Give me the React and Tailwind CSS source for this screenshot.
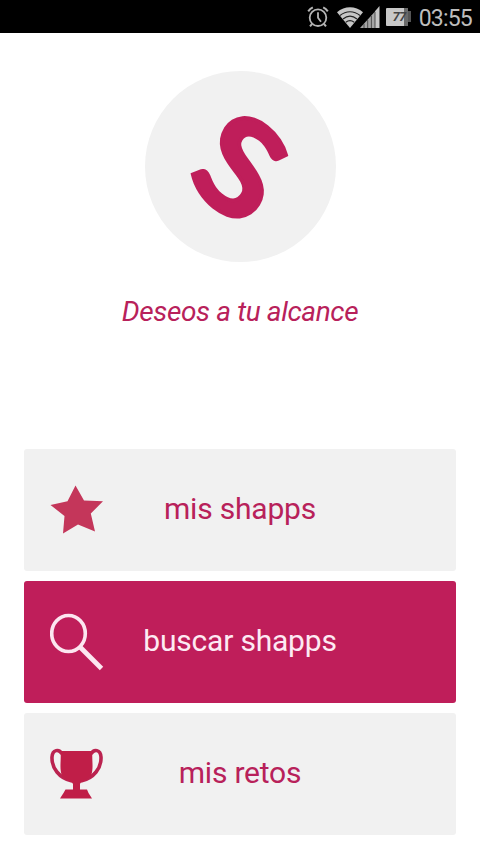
import clsx from 'clsx';

function AlarmIcon() {
  return (
    <svg width="22" height="22" viewBox="0 0 22 22" fill="none" stroke="#b4b4b4" strokeWidth="1.8">
      <circle cx="11" cy="11.7" r="8.3" />
      <path d="M11 6.2v5.6l3 4" />
      <path d="M1.2 5.4a13 13 0 0 1 4.6-4M20.8 5.4a13 13 0 0 0-4.6-4M5 18l-2 2.4M17 18l2 2.4" strokeWidth="2" />
    </svg>
  );
}

function WifiIcon() {
  return (
    <svg width="26" height="21" viewBox="0 0 26 21">
      <path d="M0 5.2C7.5-1.4 18.5-1.4 26 5.2L13 21Z" fill="#c6c6c6" />
      <g fill="none" stroke="#222" strokeWidth="1.1">
        <path d="M3 8.5c6-5 14-5 20 0" />
        <path d="M6 12c4.3-3.5 9.7-3.5 14 0" />
        <path d="M8.8 15.2c2.6-2 5.8-2 8.4 0" />
      </g>
    </svg>
  );
}

function SignalIcon() {
  return (
    <svg width="20" height="22" viewBox="0 0 20 22">
      <path d="M0 22L15 5.5V22Z" fill="#a4a4a4" />
      <path d="M15 5.3L19.5 0V22H15Z" fill="#c6c6c6" />
      <path d="M4 18v4M7.7 14v8M11.4 10v12M15 6v16" stroke="#444" strokeWidth="0.9" />
    </svg>
  );
}

function Battery() {
  return (
    <div className="flex items-center">
      <div className="flex h-[18px] w-[22px] items-center justify-end rounded-l-[1px] bg-linear-to-r from-[#c8c8c8] from-80% to-[#6a6a6a] to-80%">
        <span className="pr-0.5 text-[13px] leading-none font-bold tracking-tighter text-[#444] italic">77</span>
      </div>
      <div className="h-[11px] w-[3px] bg-[#555]" />
    </div>
  );
}

function Logo() {
  return (
    <div className="flex size-[191px] items-center justify-center rounded-full bg-[#f1f1f1]">
      <svg width="191" height="191" viewBox="0 0 191 191" className="overflow-visible">
        <text
          transform="translate(95.5 95.8) scale(1.05 1.2) rotate(35) scale(1.35 1.15)"
          y="36"
          textAnchor="middle"
          fontSize="99"
          strokeWidth="2.6"
          className="fill-[#bf1e5a] stroke-[#bf1e5a] font-[Lato] font-bold"
        >
          S
        </text>
      </svg>
    </div>
  );
}

function StarIcon() {
  return (
    <svg width="54" height="50" viewBox="0 0 54 50">
      <path d="M25.5 0.5L34 15.5L53 16.3L40.8 28.5L45 46.6L28 39.5L13 48.6L14.5 31L0.5 20L17.5 16.3Z" fill="#c4365a" />
    </svg>
  );
}

function SearchIcon() {
  return (
    <svg width="54" height="60" viewBox="0 0 54 60" fill="none" stroke="#fce6f0">
      <ellipse cx="18.5" cy="21.5" rx="16.8" ry="18" strokeWidth="3.6" />
      <path d="M30.5 35.5L51.5 56.5" strokeWidth="4.8" />
    </svg>
  );
}

function TrophyIcon() {
  return (
    <svg width="54" height="51" viewBox="0 0 54 51">
      <g fill="none" stroke="#bb2350" strokeWidth="3.6">
        <path d="M12 6C9 0.5 2.5 1.5 2 9C1.5 20 9 30 22 33" />
        <path d="M41 6C44 0.5 50.5 1.5 51 9C51.5 20 44 30 31 33" />
      </g>
      <path d="M10.5 3H42.5C41.5 12 44 20 41 28C37 33 31 33 30 36V41.5H37L38.5 45L42 50.5H10L13.5 45L15.5 41.5H23V36C22 33 16 33 12 28C9 20 11.5 12 10.5 3Z" fill="#c01e48" />
    </svg>
  );
}

const items = [
  { label: 'mis shapps', Icon: StarIcon },
  { label: 'buscar shapps', Icon: SearchIcon, active: true },
  { label: 'mis retos', Icon: TrophyIcon },
];

export default function App() {
  return (
    <div className="flex h-[854px] w-[480px] flex-col bg-white font-[Roboto,sans-serif]">
      <header className="flex h-[33px] items-center justify-end bg-black pr-2">
        <AlarmIcon />
        <div className="ml-2 flex items-end">
          <WifiIcon />
          <div className="-ml-[3px]">
            <SignalIcon />
          </div>
        </div>
        <div className="ml-1.5">
          <Battery />
        </div>
        <span className="ml-2 pt-[3px] text-[23px] leading-none tracking-[-0.8px] text-[#bdbdbd]">03:55</span>
      </header>
      <main className="flex flex-1 flex-col items-center px-6 pt-[38px]">
        <Logo />
        <p className="mt-8 text-[28px] leading-9 tracking-[-0.37px] text-[#b8215a] italic">Deseos a tu alcance</p>
        <nav className="mt-auto mb-[19px] flex w-full flex-col gap-[9.5px]">
          {items.map(({ label, Icon, active }) => (
            <button
              key={label}
              className={clsx(
                'grid h-[122.5px] grid-cols-[54px_1fr_54px] items-center rounded-[3px] px-[26px] text-[30px] tracking-[-0.2px]',
                active ? 'bg-[#bf1e5a] text-[#fdeaf3]' : 'bg-[#f1f1f1] text-[#b8215a]',
              )}
            >
              <Icon />
              <span className="pb-0.5 whitespace-nowrap">{label}</span>
            </button>
          ))}
        </nav>
      </main>
    </div>
  );
}
